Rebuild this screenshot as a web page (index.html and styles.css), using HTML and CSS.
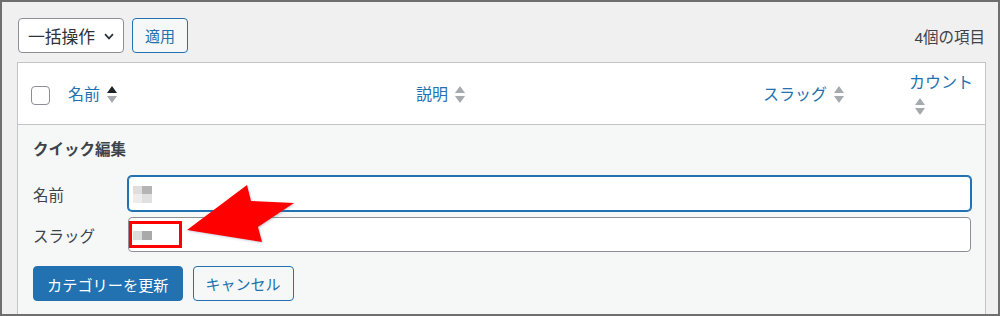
FILE: index.html
```html
<!DOCTYPE html>
<html lang="ja">
<head>
<meta charset="utf-8">
<title>クイック編集</title>
<link rel="stylesheet" href="styles.css">
</head>
<body>
<div class="frame">
  <div class="tablenav">
    <div class="actions">
      <div class="select"><span>一括操作</span>
        <svg class="chev" width="10" height="7" viewBox="0 0 10 7"><path d="M1 1.2 L5 5.4 L9 1.2" fill="none" stroke="#2c3338" stroke-width="1.7"/></svg>
      </div>
      <button class="btn">適用</button>
    </div>
    <div class="count">4個の項目</div>
  </div>

  <div class="table">
    <div class="thead">
      <div class="th cb"><span class="checkbox"></span></div>
      <div class="th"><a href="#">名前</a>
        <svg class="sort" width="10" height="18" viewBox="0 0 10 18"><polygon class="up active" points="0,7 5,0 10,7"/><polygon class="down" points="0,10 10,10 5,17"/></svg>
      </div>
      <div class="th"><a href="#">説明</a>
        <svg class="sort" width="10" height="18" viewBox="0 0 10 18"><polygon class="up" points="0,7 5,0 10,7"/><polygon class="down" points="0,10 10,10 5,17"/></svg>
      </div>
      <div class="th"><a href="#">スラッグ</a>
        <svg class="sort" width="10" height="18" viewBox="0 0 10 18"><polygon class="up" points="0,7 5,0 10,7"/><polygon class="down" points="0,10 10,10 5,17"/></svg>
      </div>
      <div class="th posts"><a href="#">カウント</a>
        <svg class="sort" width="10" height="18" viewBox="0 0 10 18"><polygon class="up" points="0,7 5,0 10,7"/><polygon class="down" points="0,10 10,10 5,17"/></svg>
      </div>
    </div>

    <div class="quick">
      <div class="qtitle">クイック編集</div>
      <div class="fields">
        <div class="field">
          <label class="label">名前</label>
          <div class="input focus">
            <span class="mosaic m-name"><i class="b1"></i><i class="b2"></i><i class="b3"></i><i class="b4"></i></span>
          </div>
        </div>
        <div class="field">
          <label class="label">スラッグ</label>
          <div class="input">
            <span class="mosaic m-slug"><i class="s1"></i><i class="s2"></i></span>
          </div>
        </div>
      </div>
      <div class="buttons">
        <button class="btn primary">カテゴリーを更新</button>
        <button class="btn">キャンセル</button>
      </div>
    </div>
  </div>

  <div class="annot-box"></div>
  <svg class="annot-arrow" width="112" height="64" viewBox="185 183 112 64">
    <polygon points="187,230 247,185 251,201 294,203 258,227 262,242" fill="#ff0000"/>
  </svg>
</div>
</body>
</html>
```

FILE: styles.css
```css
body {
  margin: 0;
  font-family: "Liberation Sans", "Noto Sans CJK JP", sans-serif;
}

.frame {
  position: relative;
  width: 1000px;
  height: 316px;
  box-sizing: border-box;
  border: 2px solid #6f6f6f;
  background: #f0f0f1;
  padding: 16px 12px 0 15px;
  overflow: hidden;
}

.tablenav {
  display: flex;
  justify-content: space-between;
  align-items: center;
  height: 35px;
  margin: 0 0 9px 1px;
}

.actions {
  display: flex;
  gap: 8px;
}

.select {
  box-sizing: border-box;
  width: 106px;
  height: 35px;
  border: 1px solid #8c8f94;
  border-radius: 4px;
  background: #fff;
  display: flex;
  align-items: center;
  justify-content: space-between;
  padding: 0 9px 0 9px;
  font-size: 16.8px;
  color: #2c3338;
}

.chev {
  display: block;
  margin-top: 1px;
}

.count {
  font-size: 15.5px;
  color: #3c434a;
  margin-right: 1px;
}

.btn {
  height: 35px;
  box-sizing: border-box;
  border: 1px solid #2271b1;
  border-radius: 4px;
  background: #f6f7f7;
  color: #2271b1;
  font-family: inherit;
  font-size: 15px;
  padding: 0 12px;
  cursor: pointer;
}

.btn.primary {
  background: #2271b1;
  color: #fff;
  font-size: 15.2px;
  padding: 0 13px;
}

.table {
  background: #fff;
  border: 1px solid #c3c4c7;
  height: 320px;
}

.thead {
  display: grid;
  grid-template-columns: 40px 348px 347px 146px 1fr;
  height: 61px;
  border-bottom: 1px solid #c3c4c7;
}

.th {
  display: flex;
  align-items: center;
  padding: 2px 0 0 10px;
  font-size: 16px;
}

.th a {
  color: #2271b1;
  text-decoration: none;
  line-height: 20px;
}

.sort {
  display: block;
  margin-left: 7px;
}

.sort polygon {
  fill: #a7aaad;
}

.sort polygon.active {
  fill: #1d2327;
}

.th.cb {
  padding-left: 13px;
}

.checkbox {
  display: block;
  width: 19px;
  height: 19px;
  box-sizing: border-box;
  border: 1px solid #8c8f94;
  border-radius: 4px;
  background: #fff;
  margin-top: 1px;
}

.th.posts {
  flex-direction: column;
  align-items: flex-start;
  justify-content: center;
}

.th.posts .sort {
  margin: 5px 0 0 6px;
}

.quick {
  background: #f6f7f7;
  padding: 14px 14px 0 15px;
  height: 240px;
}

.qtitle {
  font-size: 15.5px;
  font-weight: bold;
  line-height: 22px;
  color: #3c434a;
}

.fields {
  display: flex;
  flex-direction: column;
  gap: 6px;
  margin-top: 15px;
}

.field {
  display: flex;
  align-items: center;
}

.label {
  width: 95px;
  flex: none;
  font-size: 15.5px;
  color: #3c434a;
}

.input {
  flex: 1;
  height: 35px;
  box-sizing: border-box;
  border: 1px solid #8c8f94;
  border-radius: 4px;
  background: #fff;
  display: flex;
  align-items: center;
  padding-left: 4px;
}

.input.focus {
  border-color: #2271b1;
  box-shadow: 0 0 0 1px #2271b1;
}

.mosaic {
  display: grid;
  margin-top: 2px;
}

.mosaic i {
  display: block;
}

.m-name {
  grid-template-columns: 9px 10px;
  grid-template-rows: 8px 9px;
}

.m-name .b1 { background: #dedede; }
.m-name .b2 { background: #b4b4b4; }
.m-name .b3 { background: #ededed; }
.m-name .b4 { background: #e0e0e0; }

.m-slug {
  grid-template-columns: 9px 10px;
  grid-template-rows: 9px;
}

.m-slug .s1 { background: #dcdcdc; }
.m-slug .s2 { background: #a9a9a9; }

.buttons {
  display: flex;
  gap: 10px;
  margin-top: 14px;
}

.annot-box {
  position: absolute;
  left: 127px;
  top: 219px;
  width: 53px;
  height: 27px;
  box-sizing: border-box;
  border: 3px solid #ff0000;
}

.annot-arrow {
  position: absolute;
  left: 183px;
  top: 181px;
  filter: drop-shadow(1px 1px 1px rgba(90, 110, 140, 0.35));
}
```
